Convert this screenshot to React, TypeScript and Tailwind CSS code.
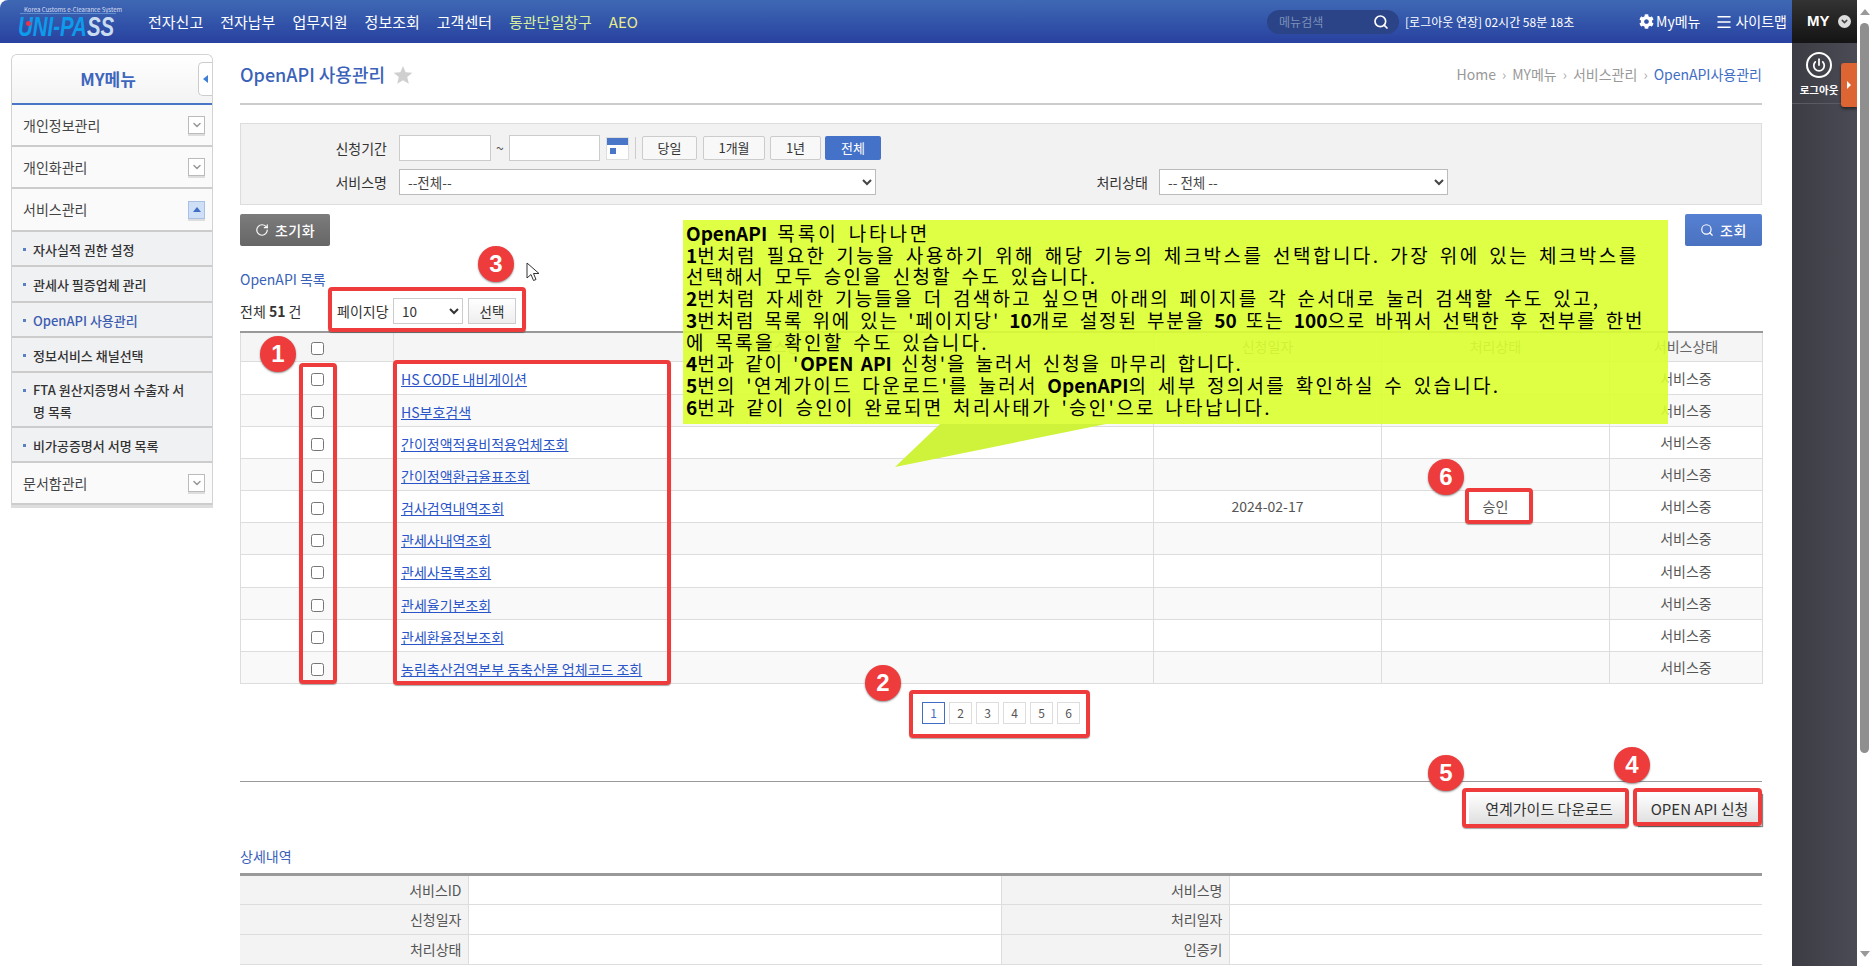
import { ChevronDown, Menu, Power, RotateCw, Search } from 'lucide-react';
import { FaCog } from 'react-icons/fa';

const FONT = "font-['Noto_Sans_CJK_KR','Liberation_Sans',sans-serif]";

const NAV = ['전자신고', '전자납부', '업무지원', '정보조회', '고객센터'];
const SERVICES = [
  'HS CODE 내비게이션',
  'HS부호검색',
  '간이정액적용비적용업체조회',
  '간이정액환급율표조회',
  '검사검역내역조회',
  '관세사내역조회',
  '관세사목록조회',
  '관세율기본조회',
  '관세환율정보조회',
  '농림축산검역본부 동축산물 업체코드 조회',
];

function Badge({ n, className }: { n: number; className: string }) {
  return (
    <div
      className={`absolute z-30 flex h-9 w-9 items-center justify-center rounded-full bg-[#ee3b3b] text-[24px] font-bold text-white shadow-[0_1px_2px_rgba(0,0,0,0.45)] font-['Liberation_Sans',sans-serif] ${className}`}
    >
      {n}
    </div>
  );
}

function Frame({ className }: { className: string }) {
  return (
    <div className={`absolute z-20 rounded-[4px] border-4 border-[#ee3b3b] shadow-[0_1px_1px_rgba(0,0,0,0.35)] ${className}`} />
  );
}

function Toggle({ open }: { open?: boolean }) {
  if (open) {
    return (
      <span className="flex h-[18px] w-[17px] items-center justify-center border border-[#a9c0e4] bg-[#cfe0f6] shadow-[0_2px_0_#ddd]">
        <span className="h-0 w-0 border-x-[4px] border-b-[5px] border-x-transparent border-b-[#3f6ec4]" />
      </span>
    );
  }
  return (
    <span className="flex h-[18px] w-[17px] items-center justify-center border border-[#bbb] bg-white shadow-[0_2px_0_#ddd]">
      <ChevronDown className="h-3 w-3 text-[#999]" strokeWidth={3} />
    </span>
  );
}

function MenuRow({ label, open, h }: { label: string; open?: boolean; h: string }) {
  return (
    <div className={`flex items-center justify-between border-b-2 border-[#ccc] bg-[#fafafa] pl-[11px] pr-[7px] text-[14px] text-[#444] ${h}`}>
      <span>{label}</span>
      <Toggle open={open} />
    </div>
  );
}

function SubRow({ label, active, h }: { label: React.ReactNode; active?: boolean; h: string }) {
  return (
    <div className={`relative flex items-center border-b-2 border-[#ccc] bg-[#f0f1f3] pl-[21px] pr-2 pt-[2px] text-[13px] font-medium leading-[22px] ${active ? 'text-[#3d5db0]' : 'text-[#333]'} ${h}`}>
      <span className="absolute left-[11px] top-[16px] h-[3px] w-[3px] bg-[#5b7fc4]" />
      <span>{label}</span>
    </div>
  );
}

function Sidebar() {
  return (
    <aside className="ml-[11px] mt-[11px] w-[202px] shrink-0 self-start rounded-t-[6px] border-x border-t border-[#d2d2d2] shadow-[0_3px_0_#ddd]">
      <div className="relative flex h-[50px] items-center justify-center rounded-t-[6px] border-b-[2px] border-[#4a76c8] bg-gradient-to-b from-white to-[#f3f3f3] pr-[8px] text-[17px] font-semibold text-[#3f66bd]">
        MY메뉴
        <span className="absolute right-0 top-[7px] flex h-[34px] w-[14px] items-center justify-center rounded-l-[5px] border border-r-0 border-[#ccc] bg-white">
          <span className="h-0 w-0 border-y-[4px] border-r-[5px] border-y-transparent border-r-[#3f7fd6]" />
        </span>
      </div>
      <MenuRow label="개인정보관리" h="h-[42px]" />
      <MenuRow label="개인화관리" h="h-[42px]" />
      <MenuRow label="서비스관리" open h="h-[43px]" />
      <SubRow label="자사실적 권한 설정" h="h-[35px]" />
      <SubRow label="관세사 필증업체 관리" h="h-[36px]" />
      <SubRow label="OpenAPI 사용관리" active h="h-[35px]" />
      <SubRow label="정보서비스 채널선택" h="h-[35px]" />
      <SubRow label={<>FTA 원산지증명서 수출자 서<br />명 목록</>} h="h-[55px]" />
      <SubRow label="비가공증명서 서명 목록" h="h-[35px]" />
      <MenuRow label="문서함관리" h="h-[42px]" />
    </aside>
  );
}

function TopBar() {
  return (
    <header className="flex h-[43px] shrink-0 items-center rounded-tl-[8px] bg-gradient-to-b from-[#3f68b4] to-[#29419f] text-white">
      <div className="relative ml-[18px] h-[43px] w-[114px] shrink-0">
        <span className="absolute left-[6px] top-[7px] whitespace-nowrap text-[6px] leading-[6px] text-[#d7def0]">Korea Customs e-Clearance System</span>
        <span className="absolute left-[2px] top-[13px] h-px w-[96px] bg-[#5b8fd0]" />
        <span className="absolute left-0 top-[13px] origin-left scale-x-[0.73] whitespace-nowrap text-[28px] font-bold italic leading-[28px] font-['Liberation_Sans',sans-serif]">
          <span className="text-[#0d9ceb]">UNI-PA</span>
          <span className="text-[#c9dcf0]">SS</span>
        </span>
        <span className="absolute left-[8px] top-[21px] h-[5px] w-[5px] rounded-full bg-[#e8344a]" />
      </div>
      <nav className="ml-[16px] flex items-center gap-[17px] text-[15px] leading-none">
        {NAV.map((n) => (
          <span key={n}>{n}</span>
        ))}
        <span className="text-[#d6f0a0]">통관단일창구</span>
        <span className="text-[#e8ec8c]">AEO</span>
      </nav>
      <div className="ml-auto flex items-center">
        <div className="flex h-[24px] w-[132px] items-center justify-between rounded-full bg-[#2b4488] pl-[12px] pr-[10px]">
          <span className="text-[12px] text-[#7d90b8]">메뉴검색</span>
          <Search className="h-[16px] w-[16px]" strokeWidth={2.5} />
        </div>
        <span className="ml-[6px] w-[234px] whitespace-nowrap text-[12px]">[로그아웃 연장] 02시간 58분 18초</span>
        <FaCog className="h-[15px] w-[15px]" />
        <span className="ml-[2px] text-[14px]">My메뉴</span>
        <Menu className="ml-[15px] h-[18px] w-[18px]" strokeWidth={2} />
        <span className="ml-[2px] mr-[5px] text-[14px]">사이트맵</span>
      </div>
    </header>
  );
}

function SearchPanel() {
  return (
    <div className="mt-[18px] flex h-[82px] flex-col gap-[8px] border border-[#ddd] bg-[#f2f2f2] pt-[11px] text-[14px] text-[#333]">
      <div className="flex h-[26px] items-center">
        <span className="w-[146px] text-right">신청기간</span>
        <input className="ml-[12px] h-[26px] w-[92px] border border-[#ccc] bg-white" />
        <span className="w-[18px] text-center text-[#555]">~</span>
        <input className="h-[26px] w-[91px] border border-[#ccc] bg-white" />
        <span className="ml-[6px] flex h-[23px] w-[23px] flex-col border border-[#ddd] bg-white">
          <span className="h-[7px] bg-[#4a76c8]" />
          <span className="ml-[3px] mt-[3px] h-[6px] w-[6px] bg-[#4a76c8]" />
        </span>
        <span className="ml-[6px] h-[22px] w-px bg-[#ccc]" />
        <button className="ml-[6px] h-[24px] w-[55px] rounded-[2px] border border-[#ccc] bg-[#f8f8f8] text-[13px]">당일</button>
        <button className="ml-[6px] h-[24px] w-[62px] rounded-[2px] border border-[#ccc] bg-[#f8f8f8] text-[13px]">1개월</button>
        <button className="ml-[5px] h-[24px] w-[51px] rounded-[2px] border border-[#ccc] bg-[#f8f8f8] text-[13px]">1년</button>
        <button className="ml-[4px] h-[24px] w-[56px] rounded-[2px] bg-[#4472c8] text-[13px] text-white">전체</button>
      </div>
      <div className="flex h-[26px] items-center">
        <span className="w-[146px] text-right">서비스명</span>
        <select className="ml-[12px] h-[26px] w-[477px] border border-[#bbb] bg-white pl-[4px] text-[13.5px] text-[#444]">
          <option>--전체--</option>
        </select>
        <span className="w-[272px] text-right">처리상태</span>
        <select className="ml-[11px] h-[26px] w-[289px] border border-[#bbb] bg-white pl-[4px] text-[13.5px] text-[#444]">
          <option>-- 전체 --</option>
        </select>
      </div>
    </div>
  );
}

function ListTable() {
  return (
    <table className="mt-[7px] w-full table-fixed border-collapse border-t-2 border-[#999] text-[14px] text-[#555]">
      <colgroup>
        <col className="w-[153px]" />
        <col className="w-[760px]" />
        <col className="w-[228px]" />
        <col className="w-[228px]" />
        <col className="w-[153px]" />
      </colgroup>
      <thead>
        <tr className="h-[29px] bg-[#f5f5f5] text-[#666]">
          <th className="border border-t-0 border-[#ddd] pt-[4px] font-normal">
            <input type="checkbox" className="block mx-auto h-[13px] w-[13px]" />
          </th>
          <th className="border border-t-0 border-[#ddd] font-normal">서비스명</th>
          <th className="border border-t-0 border-[#ddd] font-normal">신청일자</th>
          <th className="border border-t-0 border-[#ddd] font-normal">처리상태</th>
          <th className="border border-t-0 border-[#ddd] font-normal">서비스상태</th>
        </tr>
      </thead>
      <tbody>
        {SERVICES.map((s, i) => (
          <tr key={s} className={`${i === 0 || i === 6 ? 'h-[33px]' : 'h-[32px]'} ${i % 2 === 0 ? 'bg-white' : 'bg-[#f9f9f9]'}`}>
            <td className="border border-[#ddd] pt-[4px]">
              <input type="checkbox" className="block mx-auto h-[13px] w-[13px]" />
            </td>
            <td className="border border-[#ddd] pl-[7px] pt-[3px] leading-[20px]">
              <a className="text-[#2a55c8] underline">{s}</a>
            </td>
            <td className="border border-[#ddd] text-center leading-[20px]">{i === 4 ? '2024-02-17' : ''}</td>
            <td className="border border-[#ddd] text-center leading-[20px]">{i === 4 ? '승인' : ''}</td>
            <td className="border border-[#ddd] text-center leading-[20px]">서비스중</td>
          </tr>
        ))}
      </tbody>
    </table>
  );
}

function DetailTable() {
  const rows = [
    ['서비스ID', '서비스명'],
    ['신청일자', '처리일자'],
    ['처리상태', '인증키'],
  ];
  return (
    <table className="mt-[7px] w-full table-fixed border-collapse border-t-[3px] border-[#999] text-[14px] text-[#555]">
      <colgroup>
        <col className="w-[228px]" />
        <col className="w-[533px]" />
        <col className="w-[228px]" />
        <col className="w-[533px]" />
      </colgroup>
      <tbody>
        {rows.map((r) => (
          <tr key={r[0]} className="h-[30px]">
            <th className="border-b border-r border-[#ddd] bg-[#f3f3f3] pr-[6px] text-right font-normal leading-[20px]">{r[0]}</th>
            <td className="border-b border-r border-[#ddd]" />
            <th className="border-b border-r border-[#ddd] bg-[#f3f3f3] pr-[6px] text-right font-normal leading-[20px]">{r[1]}</th>
            <td className="border-b border-[#ddd]" />
          </tr>
        ))}
      </tbody>
    </table>
  );
}

function Content() {
  return (
    <main className="ml-[27px] mr-[30px] min-w-0 flex-1">
      <div className="flex h-[62px] items-center justify-between border-b-2 border-[#ccc] pt-[3px]">
        <div className="flex items-center gap-[8px] text-[18px] font-medium text-[#3a62b8]">
          OpenAPI 사용관리
          <svg viewBox="0 0 20 20" className="h-[20px] w-[20px]">
            <polygon points="10,1 12.6,7.2 19.4,7.7 14.2,12.1 15.8,18.8 10,15.2 4.2,18.8 5.8,12.1 0.6,7.7 7.4,7.2" fill="#cfcfcf" />
          </svg>
        </div>
        <div className="flex items-center gap-[6px] text-[14px] text-[#999]">
          <span>Home</span>
          <span className="text-[#aaa]">›</span>
          <span>MY메뉴</span>
          <span className="text-[#aaa]">›</span>
          <span>서비스관리</span>
          <span className="text-[#aaa]">›</span>
          <span className="text-[#3f6ec4]">OpenAPI사용관리</span>
        </div>
      </div>
      <SearchPanel />
      <div className="mt-[9px] flex justify-between text-[14px] font-medium tracking-[0.5px] text-white">
        <button className="flex h-[32px] w-[90px] items-center justify-center gap-[6px] rounded-[2px] bg-gradient-to-b from-[#7c7c7c] to-[#666]">
          <RotateCw className="h-[14px] w-[14px]" />
          초기화
        </button>
        <button className="flex h-[32px] w-[77px] items-center justify-center gap-[6px] rounded-[2px] bg-gradient-to-b from-[#5680d2] to-[#4a72c0]">
          <Search className="h-[14px] w-[14px]" />
          조회
        </button>
      </div>
      <div className="mt-[23px] text-[14px] leading-[20px] text-[#3a62b8]">OpenAPI 목록</div>
      <div className="mt-[9px] flex h-[26px] items-center text-[14px] text-[#333]">
        <span className="w-[97px]">
          전체 <b>51</b> 건
        </span>
        <span className="w-[56px] whitespace-nowrap">페이지당</span>
        <select className="h-[26px] w-[70px] border border-[#ccc] bg-white pl-[4px] text-[13.5px]">
          <option>10</option>
        </select>
        <button className="ml-[5px] h-[26px] w-[48px] border border-[#ccc] bg-gradient-to-b from-white to-[#eee] text-[13.5px]">선택</button>
      </div>
      <ListTable />
      <div className="mt-[18px] flex justify-center gap-[4px] text-[12px] text-[#555]">
        {[1, 2, 3, 4, 5, 6].map((p) => (
          <span
            key={p}
            className={`flex h-[22px] w-[23px] items-center justify-center border ${p === 1 ? 'border-[#3f6ec4] text-[#3f6ec4]' : 'border-[#ddd]'}`}
          >
            {p}
          </span>
        ))}
      </div>
      <div className="mt-[57px] border-t border-[#999]" />
      <div className="mt-[11px] flex justify-end gap-[8px] text-[15px] text-[#333]">
        <button className="h-[33px] w-[160px] bg-gradient-to-b from-white to-[#ddd]">연계가이드 다운로드</button>
        <button className="h-[33px] w-[125px] bg-gradient-to-b from-white to-[#ddd] shadow-[1px_1px_1px_#888]">OPEN API 신청</button>
      </div>
      <div className="mt-[20px] text-[14px] leading-[20px] text-[#3a62b8]">상세내역</div>
      <DetailTable />
    </main>
  );
}

function RightPanel() {
  return (
    <div className="relative w-[65px] shrink-0 bg-gradient-to-r from-[#3c3c44] to-[#4b4b55] text-white">
      <div className="flex h-[43px] items-center bg-gradient-to-b from-[#333] to-[#141414] pl-[15px]">
        <span className="text-[15px] font-bold font-['Liberation_Sans',sans-serif]">MY</span>
        <span className="ml-[8px] flex h-[13px] w-[13px] items-center justify-center rounded-full bg-[#ddd]">
          <ChevronDown className="h-[9px] w-[9px] text-[#444]" strokeWidth={4} />
        </span>
      </div>
      <div className="flex h-[61px] flex-col items-center border-b border-[#5a5a64] pr-[11px] pt-[9px]">
        <span className="flex h-[26px] w-[26px] items-center justify-center rounded-full border-2 border-white">
          <Power className="h-[14px] w-[14px]" strokeWidth={3} />
        </span>
        <span className="mt-[5px] whitespace-nowrap text-[10.5px] font-bold leading-[14px]">로그아웃</span>
      </div>
      <span className="absolute right-0 top-[63px] flex h-[44px] w-[16px] items-center justify-center rounded-l-[3px] bg-[#dd6433] shadow-[0_2px_3px_rgba(0,0,0,0.5)]">
        <span className="h-0 w-0 border-y-[4px] border-l-[4px] border-y-transparent border-l-white" />
      </span>
    </div>
  );
}

function ScrollBar() {
  return (
    <div className="relative w-[15px] shrink-0 bg-white">
      <span className="absolute left-[3px] top-[9px] h-0 w-0 border-x-[5px] border-b-[6px] border-x-transparent border-b-[#999]" />
      <span className="absolute left-[3px] top-[23px] h-[730px] w-[9px] rounded-full bg-[#8f8f8f]" />
      <span className="absolute bottom-[9px] left-[3px] h-0 w-0 border-x-[5px] border-t-[6px] border-x-transparent border-t-[#999]" />
    </div>
  );
}

function Callout() {
  return (
    <>
      <div className="absolute left-[683px] top-[220px] z-10 h-[204px] w-[985px] whitespace-nowrap bg-[#dbff30]/90 pl-[3px] pt-[2px] text-[19px] leading-[21.7px] tracking-[2.3px] text-black [word-spacing:3px] [&_b]:tracking-normal">
        <p className="tracking-[2.9px]"><b>OpenAPI</b> 목록이 나타나면</p>
        <p className="tracking-[2.45px]"><b>1</b>번처럼 필요한 기능을 사용하기 위해 해당 기능의 체크박스를 선택합니다. 가장 위에 있는 체크박스를</p>
        <p>선택해서 모두 승인을 신청할 수도 있습니다.</p>
        <p><b>2</b>번처럼 자세한 기능들을 더 검색하고 싶으면 아래의 페이지를 각 순서대로 눌러 검색할 수도 있고,</p>
        <p className="tracking-[1.9px]"><b>3</b>번처럼 목록 위에 있는 '페이지당' <b>10</b>개로 설정된 부분을 <b>50</b> 또는 <b>100</b>으로 바꿔서 선택한 후 전부를 한번</p>
        <p>에 목록을 확인할 수도 있습니다.</p>
        <p className="tracking-[1.9px]"><b>4</b>번과 같이 '<b>OPEN API</b> 신청'을 눌러서 신청을 마무리 합니다.</p>
        <p><b>5</b>번의 '연계가이드 다운로드'를 눌러서 <b>OpenAPI</b>의 세부 정의서를 확인하실 수 있습니다.</p>
        <p><b>6</b>번과 같이 승인이 완료되면 처리사태가 '승인'으로 나타납니다.</p>
      </div>
      <svg className="absolute left-[895px] top-[424px] z-10 h-[43px] w-[211px]" viewBox="0 0 211 43">
        <polygon points="45,0 211,0 0,43" fill="#cff23a" />
      </svg>
    </>
  );
}

export default function App() {
  return (
    <div className={`relative flex h-[966px] w-[1872px] overflow-hidden bg-white ${FONT}`}>
      <div className="flex w-[1792px] shrink-0 flex-col">
        <TopBar />
        <div className="flex min-h-0 flex-1">
          <Sidebar />
          <Content />
        </div>
      </div>
      <RightPanel />
      <ScrollBar />

      <Callout />

      {/* annotations */}
      <Frame className="left-[328px] top-[287px] h-[45px] w-[198px]" />
      <Frame className="left-[299px] top-[363px] h-[321px] w-[38px]" />
      <Frame className="left-[393px] top-[360px] h-[325px] w-[278px]" />
      <Frame className="left-[909px] top-[690px] h-[48px] w-[181px]" />
      <Frame className="left-[1465px] top-[488px] h-[36px] w-[68px]" />
      <Frame className="left-[1462px] top-[788px] h-[40px] w-[167px]" />
      <Frame className="left-[1633px] top-[788px] h-[38px] w-[129px]" />
      <Badge n={1} className="left-[260px] top-[336px]" />
      <Badge n={2} className="left-[865px] top-[665px]" />
      <Badge n={3} className="left-[478px] top-[246px]" />
      <Badge n={4} className="left-[1614px] top-[747px]" />
      <Badge n={5} className="left-[1428px] top-[755px]" />
      <Badge n={6} className="left-[1428px] top-[459px]" />
      <svg className="absolute left-[526px] top-[262px] z-30 h-[20px] w-[14px]" viewBox="0 0 14 20">
        <path d="M1 1v15l4-3.5 2.5 6 2.5-1-2.5-6H13z" fill="#fff" stroke="#333" strokeWidth="1" />
      </svg>
    </div>
  );
}
